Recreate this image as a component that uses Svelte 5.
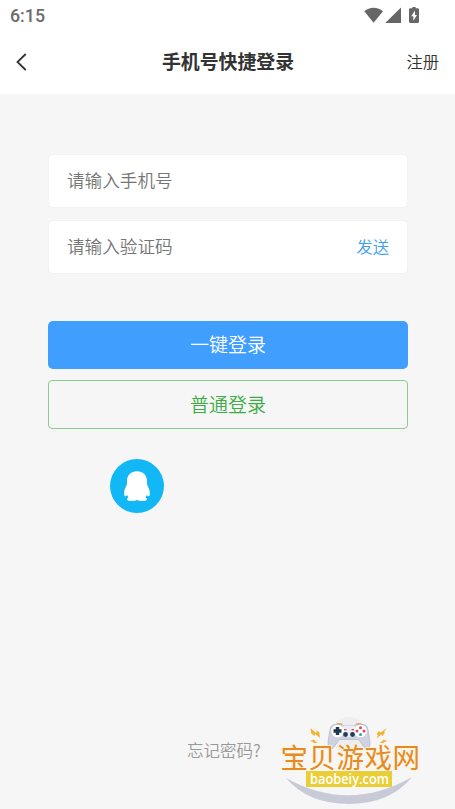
<script>
  let phone = '';
  let code = '';
</script>

<div class="page">
  <div class="status-bar">
    <span class="time">6:15</span>
    <svg class="status-icons" width="56" height="18" viewBox="0 0 56 18">
      <path d="M0.3 4.3C5.3-0.6 13.9-0.6 19 4.3L9.6 15.7z" />
      <path d="M37 0.4V16H21.2z" />
      <path fill-rule="evenodd" d="M48.4 0h3.2v1.2h2q1.4 0 1.4 1.4v11.9q0 1.5-1.4 1.5h-7.2q-1.4 0-1.4-1.5V2.6q0-1.4 1.4-1.4h2zM51 3.6l-3.8 5.7h2.1v4.4l3.7-5.8h-2z" />
    </svg>
  </div>

  <header class="nav">
    <button class="back" aria-label="返回">
      <svg width="12" height="18" viewBox="0 0 12 18">
        <path d="M9.7 1L1.5 9l8.2 8" />
      </svg>
    </button>
    <h1>手机号快捷登录</h1>
    <button class="register">注册</button>
  </header>

  <main>
    <form on:submit|preventDefault>
      <div class="field">
        <input type="tel" placeholder="请输入手机号" bind:value={phone} />
      </div>
      <div class="field">
        <input type="text" placeholder="请输入验证码" bind:value={code} />
        <button type="button" class="send">发送</button>
      </div>
      <button type="submit" class="btn primary">一键登录</button>
      <button type="button" class="btn outline">普通登录</button>
    </form>

    <button class="qq" aria-label="QQ">
      <svg width="54" height="54" viewBox="0 0 54 54">
        <circle cx="27" cy="27" r="27" fill="#12b7f5" />
        <path
          fill="#fff"
          d="M27 12.2C20.500 12.200 17 16.500 17 22v2.500C16.800 27 14.200 29.500 14.200 34c0 2 .3 3.300 1 3.300.8 0 1.300-.6 2-1.300.3 1 .7 1.800 1.300 2.500-1.300.7-1.600 1.500-1.300 2.300.6 1.500 6.600 1.700 9.800.2 3.200 1.500 9.200 1.300 9.800-.2.3-.8 0-1.600-1.300-2.300.6-.7 1-1.500 1.300-2.500.7.7 1.200 1.300 2 1.300.7 0 1-1.300 1-3.300 0-4.500-2.600-7-2.800-9.500V22C37 16.500 33.500 12.200 27 12.200z"
        />
      </svg>
    </button>

    <button class="forgot">忘记密码?</button>
  </main>

  <svg class="watermark" width="150" height="99" viewBox="275 710 150 99">
    <circle cx="349" cy="735" r="18" fill="#eeeef0" />
    <path d="M286 778Q349 813 412 777Q390 804 349 804Q308 804 286 778z" fill="#c8cad8" />

    <!-- lightning -->
    <g fill="#f3b32e">
      <path d="M310.500 728l5.500 5 1-2.500 2.500 2 .3 5.500-4.300-4-1.200 2-3-2.500z" />
      <path d="M310 741l4-1.500 1 1.500 3 2-4 0-1-1z" />
      <path d="M387 728l-6.500 4.500-1.500-1.500-2.500 3 1.200.5-.7 4 4-4 1.500 1.500 2.500-3.500-1-.5z" />
      <path d="M387.500 741l-4-1.500-1 1.500-3 2 4 0 1-1z" />
    </g>

    <!-- gamepad -->
    <path d="M335.500 725l1.500-2h4.500l.5 2zM356 725l.5-2h4.500l1.500 2z" fill="#eab05b" />
    <path
      d="M335 724.500h7.500l1.500 1.500h10l1.500-1.500h7.500q4 0 5 5L370 742Q370 749 367 749Q364.500 749 362 744L358.500 739.500H339.500L336 744Q333.500 749 331 749Q328 749 328 742L330 729.500Q331 724.500 335 724.500z"
      fill="#d0d2df"
      stroke="#a9adc2"
      stroke-width=".6"
    />
    <path d="M343 726h12v8l-2 3h-8l-2-3z" fill="#eceef5" />
    <circle cx="337.500" cy="731" r="6.300" fill="#fff" />
    <circle cx="360.500" cy="731" r="6.300" fill="#fff" />
    <path d="M335.800 727h3.400v2.300h2.300v3.400h-2.300v2.300h-3.400v-2.300h-2.300v-3.400h2.300z" fill="#21364f" />
    <g fill="#e44754">
      <circle cx="364" cy="731" r="1.500" />
      <circle cx="357" cy="731" r="1.500" />
      <rect x="344" y="729" width="2.500" height="1.300" />
      <rect x="351.500" y="729" width="2.500" height="1.300" />
    </g>
    <circle cx="360.500" cy="727.700" r="1.500" fill="#e44754" />
    <circle cx="360.500" cy="734.400" r="1.500" fill="#25a5b8" />
    <g fill="#263b57">
      <circle cx="345.500" cy="734.500" r="2.400" />
      <circle cx="352.500" cy="734.500" r="2.400" />
    </g>

    <rect x="306" y="771" width="86" height="16" fill="#eace35" />
    <text class="site-name" x="280.500" y="767.800" textLength="139.500">宝贝游戏网</text>
    <text class="site-url" x="310" y="783.800" textLength="79" lengthAdjust="spacingAndGlyphs">baobeiy.com</text>
  </svg>
</div>

<style>
  :global(body) {
    margin: 0;
    background: #f6f6f6;
  }

  .page {
    position: relative;
    display: flex;
    flex-direction: column;
    height: 809px;
    overflow: hidden;
    background: #f6f6f6;
    font-family: "Noto Sans CJK SC", sans-serif;
    font-weight: 350;
    color: #333;
  }

  button {
    padding: 0;
    border: none;
    background: none;
    font-family: inherit;
    font-weight: inherit;
    color: inherit;
    cursor: pointer;
  }

  svg {
    display: block;
  }

  .status-bar {
    display: flex;
    justify-content: space-between;
    height: 30px;
    padding: 0 35px 0 10px;
    box-sizing: border-box;
    background: #fff;
  }

  .time {
    font: 500 17.8px/32px Roboto, sans-serif;
    color: #6c6c6c;
  }

  .status-icons {
    margin-top: 7px;
    fill: #666;
  }

  .nav {
    display: grid;
    grid-template-columns: 60px 1fr 60px;
    align-items: center;
    height: 64px;
    padding: 0 16px;
    box-sizing: border-box;
    background: #fff;
  }

  .back {
    justify-self: start;
  }

  .back path {
    fill: none;
    stroke: #333;
    stroke-width: 1.8;
  }

  h1 {
    margin: 0;
    padding: 0 0 2px 1px;
    font-size: 18.9px;
    line-height: 28px;
    font-weight: 700;
    text-align: center;
  }

  .register {
    justify-self: end;
    padding: 0 0 2px;
    font-size: 16.3px;
  }

  main {
    flex: 1;
    display: flex;
    flex-direction: column;
    padding: 60px 47px 0 48px;
  }

  form {
    display: flex;
    flex-direction: column;
  }

  .field {
    display: flex;
    align-items: center;
    height: 54px;
    margin-bottom: 12px;
    padding: 0 18px;
    box-sizing: border-box;
    border: 1px solid #f2f2f2;
    border-radius: 5px;
    background: #fff;
  }

  .field input {
    flex: 1;
    min-width: 0;
    padding: 0 0 4px;
    border: none;
    outline: none;
    background: none;
    font-family: inherit;
    font-size: 17.6px;
    font-weight: inherit;
  }

  .field input::placeholder {
    color: #757575;
  }

  .send {
    padding-bottom: 2px;
    font-size: 16.3px;
    color: #409eef;
  }

  .btn {
    height: 48px;
    padding-bottom: 3px;
    border-radius: 5px;
    font-size: 19px;
  }

  .primary {
    margin-top: 35px;
    background: #409eff;
    color: #fff;
  }

  .outline {
    height: 49px;
    margin-top: 11px;
    border: 1px solid #8acb8e;
    border-radius: 4px;
    color: #3dac45;
  }

  .qq {
    align-self: flex-start;
    margin: 30px 0 0 62px;
  }

  .forgot {
    align-self: flex-start;
    margin: auto 0 47px 139px;
    font-size: 16.5px;
    color: #999;
  }

  .watermark {
    position: absolute;
    left: 275px;
    top: 710px;
  }

  .site-name {
    font-size: 27.5px;
    font-weight: 400;
    fill: #e58a24;
    stroke: #fff4dc;
    stroke-width: 1.5px;
    paint-order: stroke;
  }

  .site-url {
    font: 600 15px "Open Sans", sans-serif;
    fill: #fff;
  }
</style>
